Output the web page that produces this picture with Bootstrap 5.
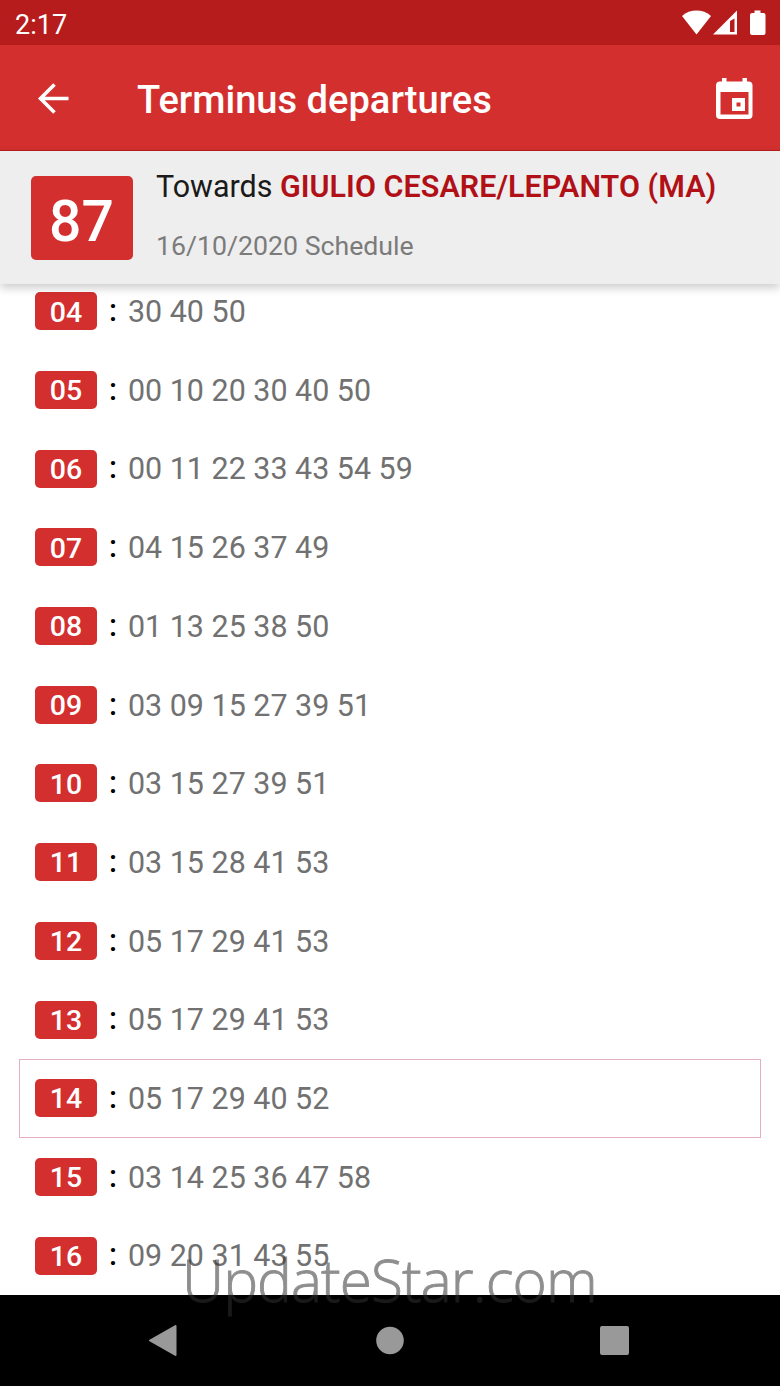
<!DOCTYPE html>
<html lang="en">
<head>
    <meta charset="UTF-8">
    <meta name="viewport" content="width=device-width, initial-scale=1.0">
    <title>Terminus departures</title>
    <link href="https://cdn.jsdelivr.net/npm/bootstrap@5.3.0/dist/css/bootstrap.min.css" rel="stylesheet">
    <style>
      body {
          font-family: Roboto, "Liberation Sans", sans-serif;
          height: 1386px;
          overflow: hidden;
          background: #fff;
      }
      .status-bar {
          height: 45px;
          background: #b71c1c;
          padding: 0 14px 0 15px;
          font-size: 27px;
          line-height: 1;
      }
      .status-bar span {
          padding-top: 5px;
      }
      .app-bar {
          height: 106px;
          background: #d32f2f;
          border-bottom: 1px solid #b71c1c;
          padding: 2px 24px 0 34px;
      }
      .app-title {
          font-size: 38.1px;
          font-weight: 500;
          line-height: 1;
          margin-left: 65px;
          padding-top: 4px;
      }
      .line-header {
          position: relative;
          z-index: 2;
          height: 133px;
          background: #eee;
          padding-left: 30.5px;
          box-shadow: 0 4px 9px rgba(0, 0, 0, .2);
      }
      .line-number {
          width: 102px;
          height: 84px;
          border-radius: 5px;
          background: #d32f2f;
          font-size: 57px;
          font-weight: 500;
          line-height: 1;
          padding-top: 7px;
      }
      .line-info {
          margin-left: 23.5px;
          padding-top: 18px;
          line-height: 36px;
          white-space: nowrap;
      }
      .towards {
          font-size: 30.45px;
          color: #1a1a1a;
      }
      .towards span {
          color: #b11116;
          font-weight: 600;
          letter-spacing: .06px;
      }
      .schedule {
          font-size: 26.7px;
          color: #7b7b7b;
          margin-top: 23px;
      }
      .hours {
          height: 1023px;
          margin-top: -12px;
          padding: 0 19px;
          overflow: hidden;
      }
      .hour-row {
          height: 78.69px;
          border: 1px solid transparent;
          padding-left: 15px;
          font-size: 30.45px;
          line-height: 1;
      }
      .hour-row.current {
          border-color: #e5afbd;
      }
      .hour-label {
          width: 62px;
          height: 38px;
          border-radius: 5px;
          background: #d32f2f;
          font-size: 28.5px;
          font-weight: 500;
          padding-top: 3px;
      }
      .colon {
          width: 31px;
          padding-left: 12px;
          color: #000;
          font-weight: 500;
      }
      .minutes {
          color: #717171;
          padding-top: 2px;
      }
      .nav-keys {
          height: 91px;
          background: #000;
      }
      .watermark {
          position: absolute;
          z-index: 3;
          left: 182px;
          top: 1239px;
          font-family: "Open Sans", sans-serif;
          font-size: 58.5px;
          font-weight: 300;
          line-height: 80px;
          letter-spacing: -.9px;
          color: #303030;
          -webkit-text-stroke: .9px #303030;
          opacity: .54;
          white-space: nowrap;
      }
    </style>
</head>
<body>
    <div class="status-bar d-flex align-items-center justify-content-between text-white">
        <span>2:17</span>
        <svg width="84" height="28" viewBox="682 8.500 84 28" fill="#fff">
            <path d="M682 15.5C690 8.200 703 8.200 711 15.500L696.500 34Z"/>
            <path fill-rule="evenodd" d="M713 34L737 10V34ZM730 20.500V31.500H734.500V18Z"/>
            <path d="M754.500 10h6v2.500h3q2 0 2 2V32.500q0 2-2 2H752q-2 0-2-2V14.500q0-2 2-2h2.500z"/>
        </svg>
    </div>
    <div class="app-bar d-flex align-items-center text-white">
        <svg width="38" height="38" viewBox="34 80 38 38" fill="none" stroke="#fff" stroke-width="3.600">
            <path d="M68.500 98.500H41M54.500 84.500L40.500 98.500L54.500 112.500"/>
        </svg>
        <div class="app-title">Terminus departures</div>
        <svg class="ms-auto" width="44" height="44" viewBox="712 77 44 44" fill="#fff">
            <path fill-rule="evenodd" d="M722 78h4.500v3.500h16V78h4.500v3.500h1.500q4 0 4 4V115q0 4-4 4H720q-4 0-4-4V85.500q0-4 4-4h2zM720.500 92V114.500H748.500V92Z"/>
            <path fill-rule="evenodd" d="M732 98h13v13h-13zM736.500 102.500v4h4v-4z"/>
        </svg>
    </div>
    <div class="line-header d-flex">
        <div class="line-number d-flex align-items-center justify-content-center align-self-center text-white">87</div>
        <div class="line-info">
            <div class="towards">Towards <span>GIULIO CESARE/LEPANTO (MA)</span></div>
            <div class="schedule">16/10/2020 Schedule</div>
        </div>
    </div>
    <div class="hours" id="hours"></div>
    <div class="nav-keys">
        <svg class="d-block" width="780" height="91" viewBox="0 1295 780 91" fill="#999" stroke="#999" stroke-width="2" stroke-linejoin="round">
            <path d="M150 1340.500L175.500 1326V1355Z"/>
            <circle cx="390" cy="1340.500" r="12.800"/>
            <rect x="601" y="1327" width="27" height="27" rx="1"/>
        </svg>
    </div>
    <div class="watermark">UpdateStar.com</div>

    <script src="https://cdn.jsdelivr.net/npm/bootstrap@5.3.0/dist/js/bootstrap.bundle.min.js"></script>
    <script>
        const currentHour = '14';
        const departures = [
            ['04', '30 40 50'],
            ['05', '00 10 20 30 40 50'],
            ['06', '00 11 22 33 43 54 59'],
            ['07', '04 15 26 37 49'],
            ['08', '01 13 25 38 50'],
            ['09', '03 09 15 27 39 51'],
            ['10', '03 15 27 39 51'],
            ['11', '03 15 28 41 53'],
            ['12', '05 17 29 41 53'],
            ['13', '05 17 29 41 53'],
            ['14', '05 17 29 40 52'],
            ['15', '03 14 25 36 47 58'],
            ['16', '09 20 31 43 55']
        ];

        document.getElementById('hours').innerHTML = departures.map(([hour, minutes]) => `
            <div class="hour-row d-flex align-items-center ${hour === currentHour ? 'current' : ''}">
                <span class="hour-label d-flex align-items-center justify-content-center text-white">${hour}</span>
                <span class="colon">:</span>
                <span class="minutes">${minutes}</span>
            </div>
        `).join('');
    </script>
</body>
</html>
